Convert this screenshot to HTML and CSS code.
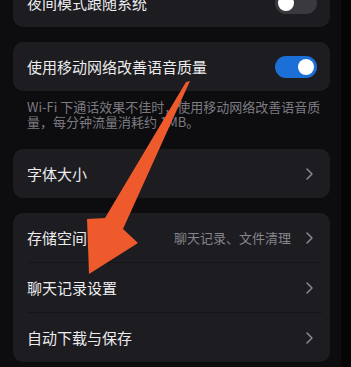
FILE: index.html
```html
<!DOCTYPE html>
<html lang="zh-CN">
<head>
<meta charset="utf-8">
<link rel="stylesheet" href="styles.css">
</head>
<body>
<div class="page">
  <section class="card card-top">
    <div class="row">
      <span class="label">夜间模式跟随系统</span>
      <span class="switch"><span class="knob"></span></span>
    </div>
  </section>

  <section class="card">
    <div class="row">
      <span class="label">使用移动网络改善语音质量</span>
      <span class="switch on"><span class="knob"></span></span>
    </div>
  </section>
  <p class="note">Wi-Fi 下通话效果不佳时，使用移动网络改善语音质量，每分钟流量消耗约 1MB。</p>

  <section class="card">
    <div class="row link">
      <span class="label">字体大小</span>
      <svg class="chev" viewBox="0 0 7 12"><path d="M1 1l5 5-5 5"/></svg>
    </div>
  </section>

  <section class="card card-last">
    <div class="row link">
      <span class="label">存储空间</span>
      <span class="value">聊天记录、文件清理</span>
      <svg class="chev" viewBox="0 0 7 12"><path d="M1 1l5 5-5 5"/></svg>
    </div>
    <div class="divider"></div>
    <div class="row link">
      <span class="label">聊天记录设置</span>
      <svg class="chev" viewBox="0 0 7 12"><path d="M1 1l5 5-5 5"/></svg>
    </div>
    <div class="divider"></div>
    <div class="row link">
      <span class="label">自动下载与保存</span>
      <svg class="chev" viewBox="0 0 7 12"><path d="M1 1l5 5-5 5"/></svg>
    </div>
  </section>
</div>

<svg class="arrow" viewBox="0 0 351 367" width="351" height="367">
  <polygon points="186,82 190,81 123,229 138,243 89,274 87,219 105,218"/>
</svg>
</body>
</html>
```

FILE: styles.css
```css
html, body {
  margin: 0;
  padding: 0;
}

body {
  width: 351px;
  height: 367px;
  overflow: hidden;
  position: relative;
  background: linear-gradient(to right, #0d0c0f 341px, #060607 341px);
  font-family: "Noto Sans CJK SC", "Noto Sans", sans-serif;
  color: #ececee;
}

.page {
  padding: 0 21px 0 13px;
}

.card {
  background: #1d1c20;
  border-radius: 10px;
}

.card-top {
  margin-top: -22px;
  margin-bottom: 15px;
}

.card-last {
  margin-top: 15px;
}

.row {
  height: 49px;
  display: flex;
  align-items: center;
  padding: 0 13px 0 14px;
}

.row.link {
  padding-right: 17px;
}

.label {
  flex: 1;
  font-size: 15px;
  line-height: 20px;
  white-space: nowrap;
}

.value {
  font-size: 13px;
  color: #86858b;
  margin-right: 15px;
  white-space: nowrap;
}

.chev {
  width: 7px;
  height: 12px;
  fill: none;
  stroke: #8a898f;
  stroke-width: 1.5;
  stroke-linecap: round;
  stroke-linejoin: round;
}

.switch {
  width: 42px;
  height: 22px;
  border-radius: 11px;
  background: #3a393e;
  padding: 3px;
  box-sizing: border-box;
  display: flex;
}

.switch.on {
  background: #1b6fd6;
  justify-content: flex-end;
}

.knob {
  width: 16px;
  height: 16px;
  border-radius: 50%;
  background: #ffffff;
}

.note {
  margin: 8px 0 20px;
  padding: 0 8px 0 14px;
  font-size: 13px;
  line-height: 15px;
  color: #7c7b81;
}

.divider {
  height: 1px;
  margin: 0 8px 0 15px;
  background: #151417;
}

.arrow {
  position: absolute;
  left: 0;
  top: 0;
  fill: #ee5a2b;
}
```
